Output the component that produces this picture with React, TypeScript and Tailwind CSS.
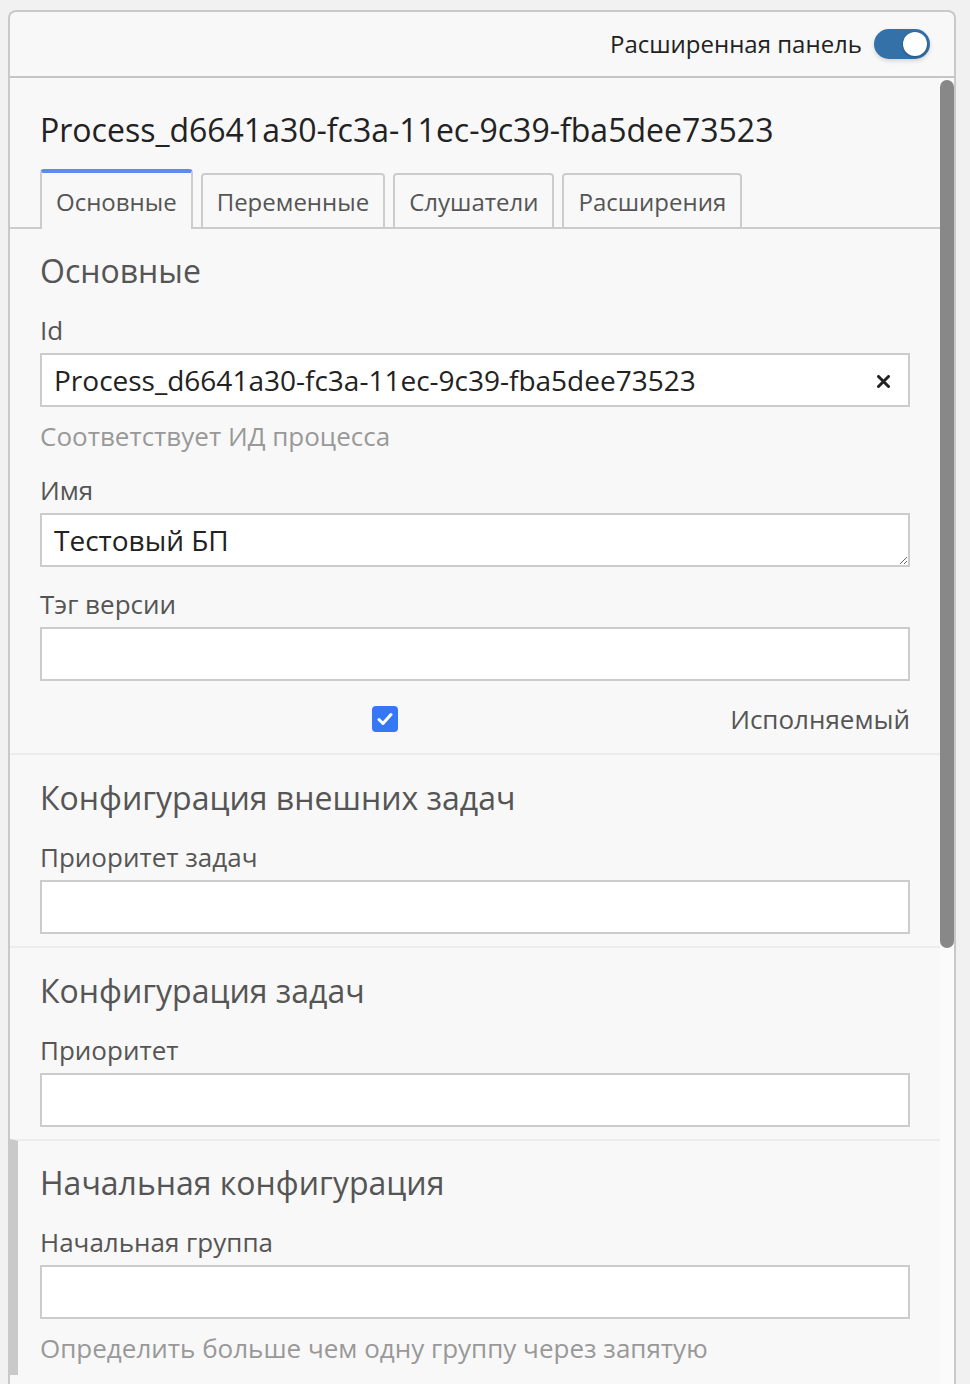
import React from 'react'

const font = { fontFamily: '"Open Sans", "Noto Sans", sans-serif' }

function Label({ children }: { children: React.ReactNode }) {
  return <div className="text-[26px] leading-[30px] text-[#555] mb-2">{children}</div>
}

function Hint({ children }: { children: React.ReactNode }) {
  return <div className="text-[26px] leading-[30px] text-[#999] mt-[14px]">{children}</div>
}

function TextInput({ value = '', clear = false }: { value?: string; clear?: boolean }) {
  return (
    <div className="relative h-[54px] border-2 border-[#ccc] bg-white flex items-center">
      <input
        readOnly
        value={value}
        className="w-full h-full bg-transparent outline-none px-[12px] text-[28px] text-[#222]"
        style={font}
      />
      {clear && (
        <svg className="absolute right-[18px] top-[20px]" width="13" height="13" viewBox="0 0 13 13">
          <path d="M1.5 1.5 L11.5 11.5 M11.5 1.5 L1.5 11.5" stroke="#222" strokeWidth="3" strokeLinecap="round" />
        </svg>
      )}
    </div>
  )
}

function Heading({ children }: { children: React.ReactNode }) {
  return <h2 className="text-[32px] leading-[36px] text-[#555] mb-[26px]">{children}</h2>
}

const tabs = ['Основные', 'Переменные', 'Слушатели', 'Расширения']

export default function App() {
  return (
    <div className="h-screen overflow-hidden bg-[#f1f1f1] pl-[8px] pt-[10px] pr-[14px]" style={font}>
      <div className="h-full flex flex-col bg-[#f8f8f8] border-2 border-[#c9c9c9] rounded-t-[8px] border-b-0">
        {/* header */}
        <div className="h-[66px] shrink-0 flex items-center justify-end pr-[24px] border-b-2 border-[#c5c5c5]">
          <span className="text-[24px] text-[#222] mr-[12px]">Расширенная панель</span>
          <span className="relative w-[56px] h-[30px] rounded-full bg-[#3371a8] shadow-[0_2px_4px_rgba(0,0,0,0.15)]">
            <span className="absolute right-[3px] top-[3px] w-[24px] h-[24px] rounded-full bg-white shadow-[0_1px_3px_rgba(0,0,0,0.3)]" />
          </span>
        </div>

        <div className="flex-1 flex min-h-0">
          <div className="flex-1 min-w-0">
            <h1 className="text-[32px] leading-[36px] text-[#222] pl-[30px] pt-[34px]">
              Process_d6641a30-fc3a-11ec-9c39-fba5dee73523
            </h1>

            {/* tabs */}
            <div className="mt-[23px] h-[58px] flex items-end gap-[8px] pl-[30px] border-b-2 border-[#ccc]">
              {tabs.map((t, i) =>
                i === 0 ? (
                  <div
                    key={t}
                    className="h-[60px] -mb-[2px] px-[14px] pt-[2px] flex items-center border-t-4 border-x-2 border-t-[#5b8def] border-x-[#ccc] rounded-t-[4px] bg-[#f8f8f8] text-[24px] text-[#555]"
                  >
                    {t}
                  </div>
                ) : (
                  <div
                    key={t}
                    className="h-[56px] -mb-[2px] px-[14px] pt-[2px] flex items-center border-2 border-[#ccc] rounded-t-[4px] bg-[#f8f8f8] text-[24px] text-[#555]"
                  >
                    {t}
                  </div>
                )
              )}
            </div>

            {/* Основные */}
            <section className="px-[30px] pt-[24px] pb-[12px]">
              <Heading>Основные</Heading>
              <Label>Id</Label>
              <TextInput value="Process_d6641a30-fc3a-11ec-9c39-fba5dee73523" clear />
              <Hint>Соответствует ИД процесса</Hint>
              <div className="mt-[24px]">
                <Label>Имя</Label>
                <textarea
                  readOnly
                  value="Тестовый БП"
                  className="block w-full h-[54px] border-2 border-[#ccc] bg-white outline-none px-[12px] py-[8px] text-[28px] leading-[34px] text-[#222] resize-y"
                  style={font}
                />
              </div>
              <div className="mt-[22px]">
                <Label>Тэг версии</Label>
                <TextInput />
              </div>
              <div className="mt-[23px] mb-[7px] h-[30px] flex items-center">
                <span className="ml-[332px] w-[26px] h-[26px] rounded-[4px] bg-[#3478f6] flex items-center justify-center">
                  <svg width="16" height="14" viewBox="0 0 16 14">
                    <path d="M2 7.5 L6 11.5 L14 2.5" fill="none" stroke="white" strokeWidth="3" strokeLinecap="round" strokeLinejoin="round" />
                  </svg>
                </span>
                <span className="ml-auto text-[26px] text-[#555]">Исполняемый</span>
              </div>
            </section>

            <section className="px-[30px] pt-[25px] pb-[12px] border-t-2 border-[#ececec]">
              <Heading>Конфигурация внешних задач</Heading>
              <Label>Приоритет задач</Label>
              <TextInput />
            </section>

            <section className="px-[30px] pt-[25px] pb-[12px] border-t-2 border-[#ececec]">
              <Heading>Конфигурация задач</Heading>
              <Label>Приоритет</Label>
              <TextInput />
            </section>

            <section className="pl-[22px] pr-[30px] pt-[24px] pb-[12px] border-t-2 border-t-[#ececec] border-l-8 border-l-[#c9c9c9]">
              <Heading>Начальная конфигурация</Heading>
              <Label>Начальная группа</Label>
              <TextInput />
              <Hint>Определить больше чем одну группу через запятую</Hint>
            </section>
          </div>

          {/* scrollbar */}
          <div className="w-[14px] shrink-0 bg-[#fbfbfb]">
            <div className="mt-[2px] h-[868px] rounded-full bg-[#888]" />
          </div>
        </div>
      </div>
    </div>
  )
}
